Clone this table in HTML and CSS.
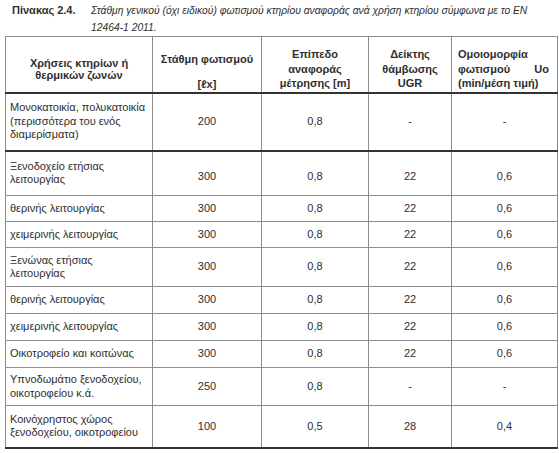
FILE: index.html
```html
<!DOCTYPE html>
<html lang="el">
<head>
  <meta charset="UTF-8" />
  <title>Πίνακας 2.4</title>
  <link rel="stylesheet" href="styles.css">
</head>
<body>

  <!-- Λεζάντα πίνακα -->
  <div class="caption">
    <span class="caption-label">Πίνακας 2.4.</span>
    <span class="caption-text">Στάθμη γενικού (όχι ειδικού) φωτισμού κτηρίου αναφοράς ανά χρήση κτηρίου σύμφωνα με το EN 12464-1 2011.</span>
  </div>

  <table class="lux">
    <colgroup>
      <col class="c-use">
      <col class="c-lux">
      <col class="c-level">
      <col class="c-ugr">
      <col class="c-uo">
    </colgroup>
    <thead>
      <tr class="head">
        <th class="h-use">Χρήσεις κτηρίων ή<br>θερμικών ζωνών</th>
        <th class="h-lux">Στάθμη φωτισμού<span class="unit">[ℓx]</span></th>
        <th>Επίπεδο<br>αναφοράς<br>μέτρησης [m]</th>
        <th>Δείκτης<br>θάμβωσης<br>UGR</th>
        <th class="h-uo">
          Ομοιομορφία
          <span class="spread"><span>φωτισμού</span><span>Uo</span></span>
          (min/μέση τιμή)
        </th>
      </tr>
    </thead>
    <tbody>
      <tr class="r1 sep">
        <td>Μονοκατοικία, πολυκατοικία (περισσότερα του ενός διαμερίσματα)</td>
        <td>200</td><td>0,8</td><td>-</td><td>-</td>
      </tr>
      <tr class="r2">
        <td>Ξενοδοχείο ετήσιας λειτουργίας</td>
        <td>300</td><td>0,8</td><td>22</td><td>0,6</td>
      </tr>
      <tr class="r3">
        <td>θερινής λειτουργίας</td>
        <td>300</td><td>0,8</td><td>22</td><td>0,6</td>
      </tr>
      <tr class="r3">
        <td>χειμερινής λειτουργίας</td>
        <td>300</td><td>0,8</td><td>22</td><td>0,6</td>
      </tr>
      <tr class="r5">
        <td>Ξενώνας ετήσιας<br>λειτουργίας</td>
        <td>300</td><td>0,8</td><td>22</td><td>0,6</td>
      </tr>
      <tr class="r6">
        <td>θερινής λειτουργίας</td>
        <td>300</td><td>0,8</td><td>22</td><td>0,6</td>
      </tr>
      <tr class="r6">
        <td>χειμερινής λειτουργίας</td>
        <td>300</td><td>0,8</td><td>22</td><td>0,6</td>
      </tr>
      <tr class="r6">
        <td>Οικοτροφείο και κοιτώνας</td>
        <td>300</td><td>0,8</td><td>22</td><td>0,6</td>
      </tr>
      <tr class="r9">
        <td>Υπνοδωμάτιο ξενοδοχείου,<br>οικοτροφείου κ.ά.</td>
        <td>250</td><td>0,8</td><td>-</td><td>-</td>
      </tr>
      <tr class="r10">
        <td>Κοινόχρηστος χώρος<br>ξενοδοχείου, οικοτροφείου</td>
        <td>100</td><td>0,5</td><td>28</td><td>0,4</td>
      </tr>
    </tbody>
  </table>

</body>
</html>
```

FILE: styles.css
```css
* {
  box-sizing: border-box;
  margin: 0;
  padding: 0;
}

html, body {
  background: #fff;
  color: #2e2e2e;
  font-family: "Liberation Sans", Arial, sans-serif;
  font-size: 11px;
}

/* Λεζάντα */
.caption {
  display: flex;
  padding: 2px 0 0 12px;
  line-height: 17px;
}

.caption-label {
  flex: 0 0 79px;
  font-weight: bold;
}

.caption-text {
  width: 452px;
  font-size: 10.3px;
  font-style: italic;
}

/* Πίνακας */
.lux {
  margin-left: 5px;
  border-collapse: collapse;
  table-layout: fixed;
  width: 552px;
}

.c-use { width: 147px; }
.c-lux { width: 109px; }
.c-level { width: 107px; }
.c-ugr { width: 83px; }
.c-uo { width: 106px; }

.lux th,
.lux td {
  border: 1px solid #8c8c8c;
  vertical-align: middle;
  text-align: center;
  line-height: 13.5px;
}

.lux th {
  font-weight: bold;
  vertical-align: top;
  line-height: 14.5px;
  padding-top: 10px;
}

.lux td:first-child {
  text-align: left;
  padding: 0 4px;
}

.head {
  height: 56px;
}

.head th {
  border-bottom: 2px solid #333;
}

.lux th.h-use {
  line-height: 11.5px;
  padding-top: 21px;
}

.lux th.h-lux {
  padding-top: 15px;
}

.h-lux .unit {
  display: block;
  margin-top: 10px;
}

.lux th.h-uo {
  text-align: left;
  padding-left: 6px;
  padding-right: 8px;
}

.spread {
  display: flex;
  justify-content: space-between;
}

.sep td {
  border-bottom: 2px solid #333;
}

.r1 { height: 58px; }
.r2 { height: 45px; }
.r3 { height: 26px; }
.r5 { height: 39px; }
.r6 { height: 27px; }
.r9 { height: 38px; }
.r10 { height: 42px; }

.r2 td {
  padding-top: 6px;
}

.r10 td {
  border-bottom: 2px solid #333;
}
```
